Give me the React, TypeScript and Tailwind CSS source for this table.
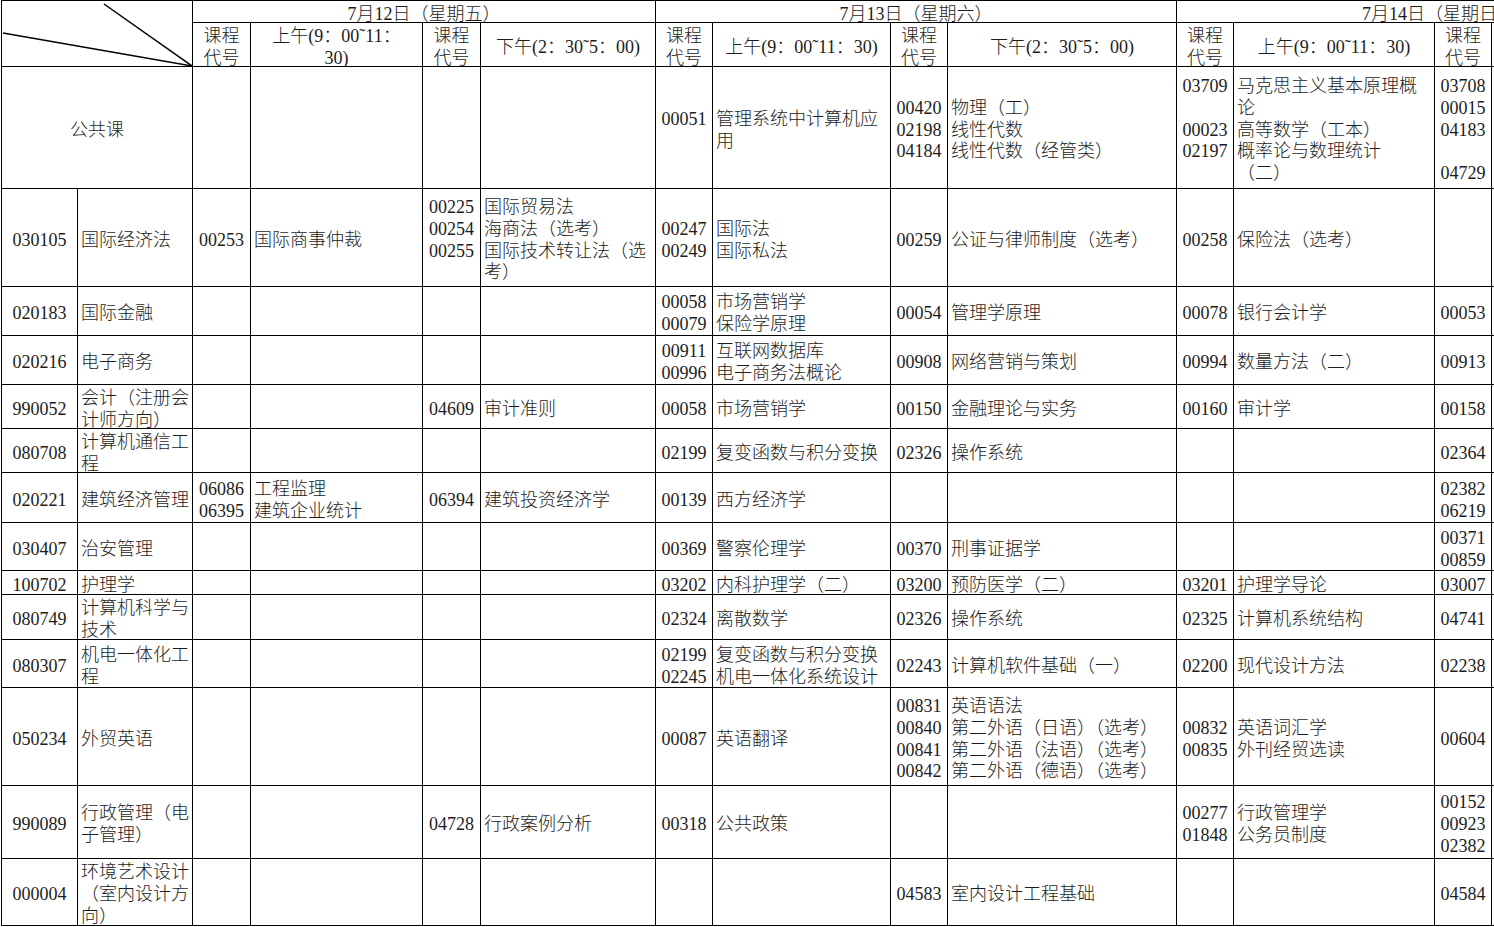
import React from "react";

type Row = { code: string; name: string[]; cells: string[][] };

// 7/12 上午, 7/12 下午, 7/13 上午, 7/13 下午, 7/14 上午, 7/14 下午 — code + name pairs
const rows: Row[] = [
  {
    code: "030105",
    name: ["国际经济法"],
    cells: [
      ["00253"], ["国际商事仲裁"],
      ["00225", "00254", "00255", ""], ["国际贸易法", "海商法（选考）", "国际技术转让法（选", "考）"],
      ["00247", "00249"], ["国际法", "国际私法"],
      ["00259"], ["公证与律师制度（选考）"],
      ["00258"], ["保险法（选考）"],
      [], [],
    ],
  },
  {
    code: "020183",
    name: ["国际金融"],
    cells: [
      [], [], [], [],
      ["00058", "00079"], ["市场营销学", "保险学原理"],
      ["00054"], ["管理学原理"],
      ["00078"], ["银行会计学"],
      ["00053"], [],
    ],
  },
  {
    code: "020216",
    name: ["电子商务"],
    cells: [
      [], [], [], [],
      ["00911", "00996"], ["互联网数据库", "电子商务法概论"],
      ["00908"], ["网络营销与策划"],
      ["00994"], ["数量方法（二）"],
      ["00913"], [],
    ],
  },
  {
    code: "990052",
    name: ["会计（注册会", "计师方向）"],
    cells: [
      [], [],
      ["04609"], ["审计准则"],
      ["00058"], ["市场营销学"],
      ["00150"], ["金融理论与实务"],
      ["00160"], ["审计学"],
      ["00158"], [],
    ],
  },
  {
    code: "080708",
    name: ["计算机通信工", "程"],
    cells: [
      [], [], [], [],
      ["02199"], ["复变函数与积分变换"],
      ["02326"], ["操作系统"],
      [], [],
      ["02364"], [],
    ],
  },
  {
    code: "020221",
    name: ["建筑经济管理"],
    cells: [
      ["06086", "06395"], ["工程监理", "建筑企业统计"],
      ["06394"], ["建筑投资经济学"],
      ["00139"], ["西方经济学"],
      [], [], [], [],
      ["02382", "06219"], [],
    ],
  },
  {
    code: "030407",
    name: ["治安管理"],
    cells: [
      [], [], [], [],
      ["00369"], ["警察伦理学"],
      ["00370"], ["刑事证据学"],
      [], [],
      ["00371", "00859"], [],
    ],
  },
  {
    code: "100702",
    name: ["护理学"],
    cells: [
      [], [], [], [],
      ["03202"], ["内科护理学（二）"],
      ["03200"], ["预防医学（二）"],
      ["03201"], ["护理学导论"],
      ["03007"], [],
    ],
  },
  {
    code: "080749",
    name: ["计算机科学与", "技术"],
    cells: [
      [], [], [], [],
      ["02324"], ["离散数学"],
      ["02326"], ["操作系统"],
      ["02325"], ["计算机系统结构"],
      ["04741"], [],
    ],
  },
  {
    code: "080307",
    name: ["机电一体化工", "程"],
    cells: [
      [], [], [], [],
      ["02199", "02245"], ["复变函数与积分变换", "机电一体化系统设计"],
      ["02243"], ["计算机软件基础（一）"],
      ["02200"], ["现代设计方法"],
      ["02238"], [],
    ],
  },
  {
    code: "050234",
    name: ["外贸英语"],
    cells: [
      [], [], [], [],
      ["00087"], ["英语翻译"],
      ["00831", "00840", "00841", "00842"],
      ["英语语法", "第二外语（日语）（选考）", "第二外语（法语）（选考）", "第二外语（德语）（选考）"],
      ["00832", "00835"], ["英语词汇学", "外刊经贸选读"],
      ["00604"], [],
    ],
  },
  {
    code: "990089",
    name: ["行政管理（电", "子管理）"],
    cells: [
      [], [],
      ["04728"], ["行政案例分析"],
      ["00318"], ["公共政策"],
      [], [],
      ["00277", "01848"], ["行政管理学", "公务员制度"],
      ["00152", "00923", "02382"], [],
    ],
  },
  {
    code: "000004",
    name: ["环境艺术设计", "（室内设计方", "向）"],
    cells: [
      [], [], [], [], [], [],
      ["04583"], ["室内设计工程基础"],
      [], [],
      ["04584"], [],
    ],
  },
];

const publicRow: string[][] = [
  [], [], [], [],
  ["00051", ""], ["管理系统中计算机应", "用"],
  ["00420", "02198", "04184"], ["物理（工）", "线性代数", "线性代数（经管类）"],
  ["03709", "", "00023", "02197", ""],
  ["马克思主义基本原理概", "论", "高等数学（工本）", "概率论与数理统计", "（二）"],
  ["03708", "00015", "04183", "", "04729"], [],
];

const cellBase = "border-r border-b border-black flex flex-col justify-center whitespace-nowrap overflow-hidden";

// line box is 21.75px tall; the taller line-height drops the glyphs ~3px like the source sheet
function Line({ text }: { text: string }) {
  return <div className="h-[21.75px] leading-[27.5px]">{text}</div>;
}

function Lines({ lines }: { lines: string[] }) {
  return (
    <>
      {lines.map((l, i) => (
        <Line key={i} text={l} />
      ))}
    </>
  );
}

function CodeCell({ lines }: { lines: string[] }) {
  return (
    <div className={`${cellBase} items-center text-center`}>
      <Lines lines={lines} />
    </div>
  );
}

function NameCell({ lines }: { lines: string[] }) {
  return (
    <div className={`${cellBase} items-start pl-[3px]`}>
      <Lines lines={lines} />
    </div>
  );
}

function DayCells({ cells }: { cells: string[][] }) {
  return (
    <>
      {cells.map((c, i) =>
        i % 2 === 0 ? <CodeCell key={i} lines={c} /> : <NameCell key={i} lines={c} />,
      )}
    </>
  );
}

const slotHeaders = [
  ["课程", "代号"],
  ["上午(9：00˜11：", "30)"],
  ["课程", "代号"],
  ["下午(2：30˜5：00)"],
  ["课程", "代号"],
  ["上午(9：00˜11：30)"],
  ["课程", "代号"],
  ["下午(2：30˜5：00)"],
  ["课程", "代号"],
  ["上午(9：00˜11：30)"],
  ["课程", "代号"],
  ["下午(2：30˜5：00)"],
];

export default function App() {
  return (
    <div className="w-[1494px] h-[927px] overflow-hidden bg-white text-[#1c1c1c] font-['Liberation_Serif','Noto_Sans_CJK_SC',serif] font-light text-[18px] leading-[21.75px]">
      <div className="ml-[1px] grid w-max border-l border-t border-black grid-cols-[76px_115px_58px_172px_58px_175px_57px_178px_57px_229px_57px_201px_57px_209px] grid-rows-[22px_44px_122px_98px_49px_49px_44px_44px_50px_48px_24px_45px_48px_98px_73px_67px]">
        {/* corner cell with diagonal rules */}
        <div className="relative col-span-2 row-span-2 border-r border-b border-black">
          <svg className="absolute inset-0 h-full w-full" viewBox="0 0 190 65" preserveAspectRatio="none">
            <line x1="102" y1="3" x2="190" y2="65" stroke="#000" strokeWidth="1.5" />
            <line x1="1" y1="32" x2="190" y2="65" stroke="#000" strokeWidth="1.5" />
          </svg>
        </div>
        <div className={`${cellBase} col-span-4 items-center`}>
          <Line text="7月12日（星期五）" />
        </div>
        <div className={`${cellBase} col-span-4 items-center`}>
          <Line text="7月13日（星期六）" />
        </div>
        <div className={`${cellBase} col-span-4 items-center`}>
          <Line text="7月14日（星期日）" />
        </div>

        {slotHeaders.map((h, i) => (
          <CodeCell key={i} lines={h} />
        ))}

        <div className={`${cellBase} col-span-2 items-center`}>
          <Line text="公共课" />
        </div>
        <DayCells cells={publicRow} />

        {rows.map((r) => (
          <React.Fragment key={r.code}>
            <CodeCell lines={[r.code]} />
            <NameCell lines={r.name} />
            <DayCells cells={r.cells} />
          </React.Fragment>
        ))}
      </div>
    </div>
  );
}
